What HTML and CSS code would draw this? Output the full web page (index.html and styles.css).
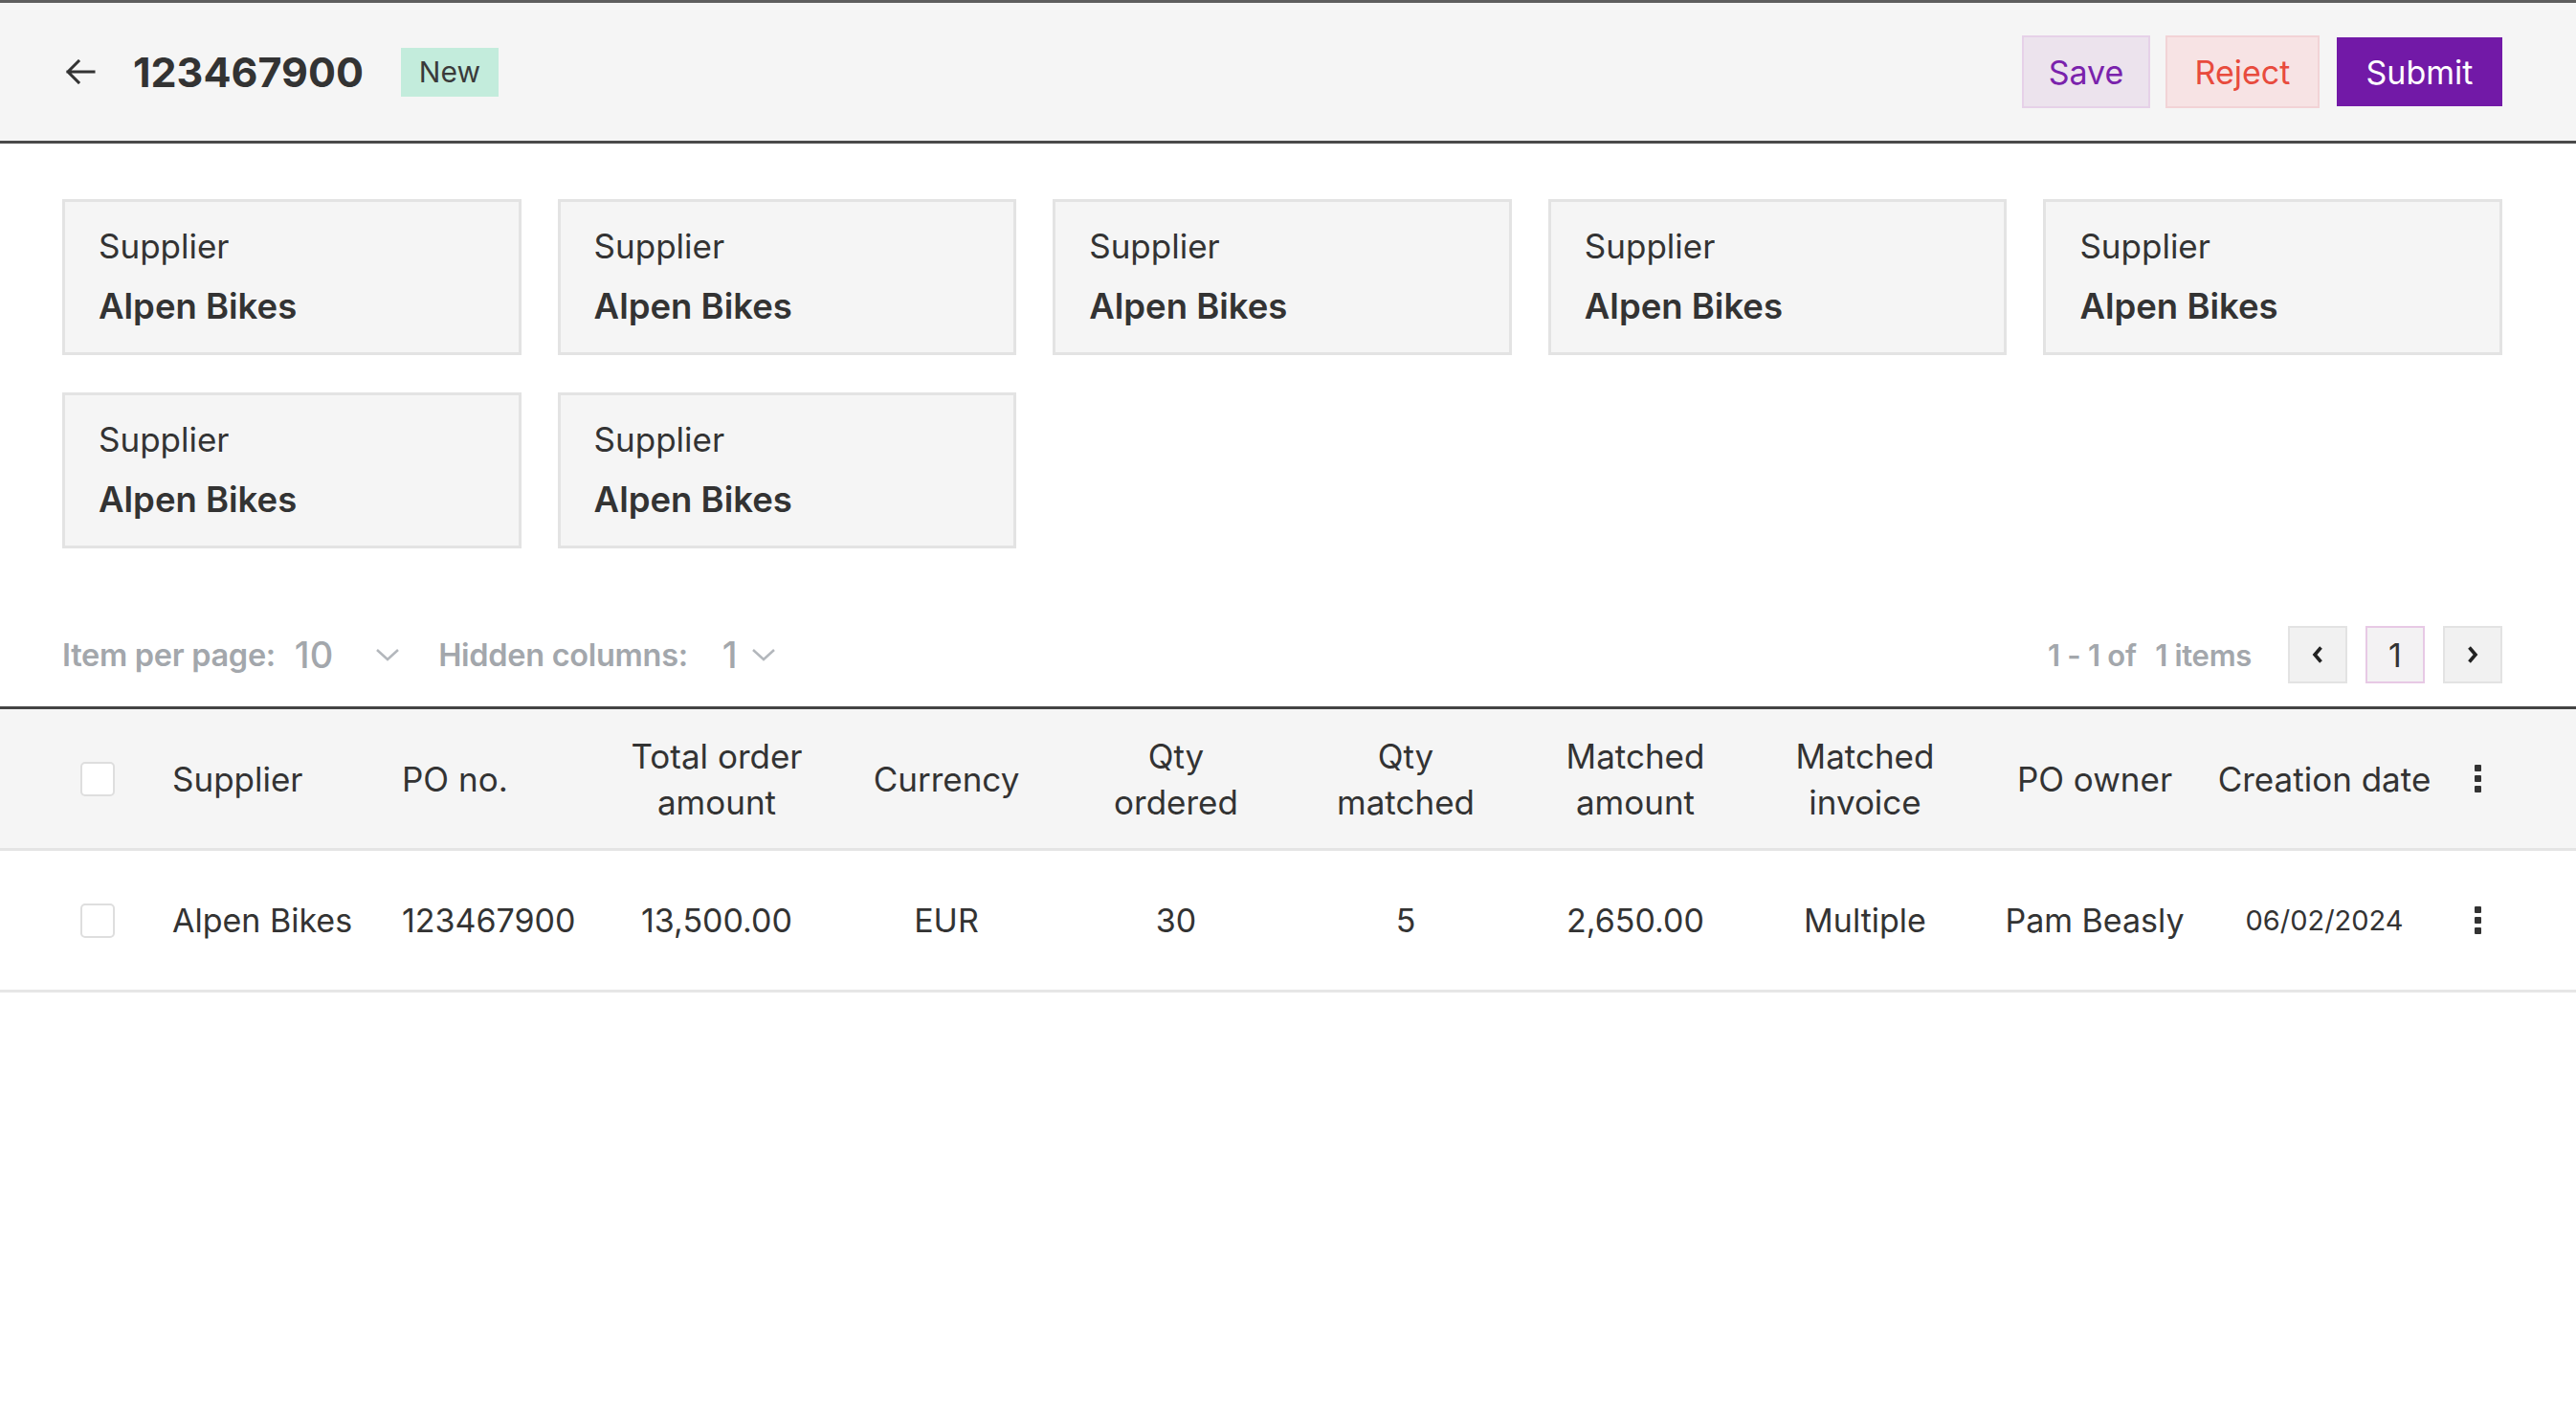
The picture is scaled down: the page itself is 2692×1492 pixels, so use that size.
FILE: index.html
```html
<!DOCTYPE html>
<html lang="en">
<head>
<meta charset="utf-8">
<title>PO 123467900</title>
<link rel="stylesheet" href="styles.css">
</head>
<body>
<header class="topbar">
  <div class="title-group">
    <svg class="back" width="32" height="26" viewBox="0 0 32 26"><path d="M30 13H3M14 2L3 13l11 11" fill="none" stroke="#333" stroke-width="3" stroke-linecap="square"/></svg>
    <h1 class="title">123467900</h1>
    <span class="badge">New</span>
  </div>
  <div class="actions">
    <button class="btn btn-save">Save</button>
    <button class="btn btn-reject">Reject</button>
    <button class="btn btn-submit">Submit</button>
  </div>
</header>

<section class="cards">
  <div class="card"><div class="card-label">Supplier</div><div class="card-value">Alpen Bikes</div></div>
  <div class="card"><div class="card-label">Supplier</div><div class="card-value">Alpen Bikes</div></div>
  <div class="card"><div class="card-label">Supplier</div><div class="card-value">Alpen Bikes</div></div>
  <div class="card"><div class="card-label">Supplier</div><div class="card-value">Alpen Bikes</div></div>
  <div class="card"><div class="card-label">Supplier</div><div class="card-value">Alpen Bikes</div></div>
  <div class="card"><div class="card-label">Supplier</div><div class="card-value">Alpen Bikes</div></div>
  <div class="card"><div class="card-label">Supplier</div><div class="card-value">Alpen Bikes</div></div>
</section>

<section class="toolbar">
  <div class="tool-left">
    <span class="tool-label">Item per page:</span>
    <span class="tool-value tv-10">10</span>
    <svg class="chev" width="26" height="14" viewBox="0 0 26 14"><polyline points="2,2 13,12 24,2" fill="none" stroke="#b3b7bc" stroke-width="2.5"/></svg>
    <span class="tool-label tl-hidden">Hidden columns:</span>
    <span class="tool-value tv-1">1</span>
    <svg class="chev chev-2" width="26" height="14" viewBox="0 0 26 14"><polyline points="2,2 13,12 24,2" fill="none" stroke="#b3b7bc" stroke-width="2.5"/></svg>
  </div>
  <div class="tool-right">
    <span class="range">1 - 1 of <span class="range-items">1 items</span></span>
    <div class="pager">
      <button class="pg"><svg width="16" height="24" viewBox="0 0 16 24"><polyline points="11.5,4.5 5,12 11.5,19.5" fill="none" stroke="#222" stroke-width="3.6"/></svg></button>
      <button class="pg pg-current">1</button>
      <button class="pg"><svg width="16" height="24" viewBox="0 0 16 24"><polyline points="4.5,4.5 11,12 4.5,19.5" fill="none" stroke="#222" stroke-width="3.6"/></svg></button>
    </div>
  </div>
</section>

<section class="table">
  <div class="row head">
    <div class="cell cb-cell"><span class="checkbox"></span></div>
    <div class="cell left">Supplier</div>
    <div class="cell left">PO no.</div>
    <div class="cell">Total order<br>amount</div>
    <div class="cell">Currency</div>
    <div class="cell">Qty<br>ordered</div>
    <div class="cell">Qty<br>matched</div>
    <div class="cell">Matched<br>amount</div>
    <div class="cell">Matched<br>invoice</div>
    <div class="cell">PO owner</div>
    <div class="cell">Creation date</div>
    <div class="cell kebab-cell"><span class="kebab"><i></i><i></i><i></i></span></div>
  </div>
  <div class="row body">
    <div class="cell cb-cell"><span class="checkbox"></span></div>
    <div class="cell left">Alpen Bikes</div>
    <div class="cell left">123467900</div>
    <div class="cell">13,500.00</div>
    <div class="cell">EUR</div>
    <div class="cell">30</div>
    <div class="cell">5</div>
    <div class="cell">2,650.00</div>
    <div class="cell">Multiple</div>
    <div class="cell">Pam Beasly</div>
    <div class="cell date">06/02/2024</div>
    <div class="cell kebab-cell"><span class="kebab"><i></i><i></i><i></i></span></div>
  </div>
</section>
</body>
</html>
```

FILE: styles.css
```css
* { box-sizing: border-box; }
html, body { margin: 0; padding: 0; background: #fff; }
body {
  font-family: Inter, "Open Sans", "Liberation Sans", sans-serif;
  color: #333;
  width: 2692px;
}

/* Header */
.topbar {
  height: 150px;
  background: #f5f5f5;
  border-top: 3px solid #5e5e5e;
  border-bottom: 3px solid #4a4a4a;
  display: flex;
  align-items: center;
  justify-content: space-between;
  padding: 0 77px 0 68px;
}
.title-group { display: flex; align-items: center; }
.back { display: block; margin-right: 39px; }
.title {
  margin: 0;
  font-size: 43px;
  font-weight: 700;
  color: #333;
  line-height: 1;
}
.badge {
  margin-left: 39px;
  width: 102px;
  height: 51px;
  background: #c3ecdc;
  color: #3a3a3a;
  font-size: 30px;
  display: flex;
  align-items: center;
  justify-content: center;
}
.actions { display: flex; align-items: center; gap: 16px; }
.btn {
  font-family: inherit;
  font-size: 34px;
  border: 2px solid transparent;
  display: flex;
  align-items: center;
  justify-content: center;
  padding: 0;
  cursor: pointer;
}
.btn-save { width: 134px; height: 76px; background: #ece3ed; border-color: #e6d1e8; color: #7a22ac; }
.btn-reject { width: 161px; height: 76px; background: #f7e3e4; border-color: #f2d3d6; color: #e84b3d; }
.btn-submit { width: 173px; height: 72px; background: #7219a7; border-color: #7219a7; color: #fff; margin-left: 2px; }

/* Cards */
.cards {
  display: grid;
  grid-template-columns: repeat(5, 1fr);
  gap: 39px 38px;
  padding: 58px 77px 0 65px;
}
.card {
  height: 163px;
  background: #f5f5f5;
  border: 3px solid #e3e3e3;
  padding: 24px 35px;
}
.card-label { font-size: 35px; line-height: 44px; color: #333; }
.card-value { font-size: 36.5px; line-height: 48px; font-weight: 600; color: #333; margin-top: 17px; }

/* Toolbar */
.toolbar {
  display: flex;
  justify-content: space-between;
  align-items: center;
  height: 60px;
  margin-top: 81px;
  margin-bottom: 24px;
  padding: 0 77px 0 65px;
}
.tool-left, .tool-right { display: flex; align-items: center; }
.tool-label { font-size: 32.5px; font-weight: 600; color: #a3a7ac; letter-spacing: -0.3px; }
.tool-value { font-size: 38px; font-weight: 500; color: #a3a7ac; }
.tv-10 { margin-left: 20px; }
.chev { display: block; margin-left: 44px; }
.tl-hidden { margin-left: 40px; }
.tv-1 { margin-left: 36px; }
.chev-2 { margin-left: 14px; }
.range { font-size: 31px; font-weight: 600; color: #a3a7ac; letter-spacing: -0.3px; }
.range-items { margin-left: 12px; }
.pager { display: flex; gap: 19px; margin-left: 38px; }
.pg {
  width: 62px;
  height: 60px;
  background: #f1f1f1;
  border: 2px solid #e3e3e3;
  display: flex;
  align-items: center;
  justify-content: center;
  padding: 0;
  font-family: inherit;
  font-size: 34px;
  color: #333;
}
.pg svg { display: block; }
.pg-current { border-color: #e7c9e5; background: #f3f2f3; }

/* Table */
.table { border-top: 3px solid #444; }
.row {
  display: grid;
  grid-template-columns: 149px repeat(10, 240px) 80px 1fr;
  align-items: center;
}
.row.head { height: 148px; background: #f5f5f5; border-bottom: 3px solid #e4e4e4; }
.row.body { height: 148px; background: #fff; border-bottom: 3px solid #e6e6e6; }
.cell { text-align: center; color: #333; }
.head .cell { font-size: 35px; line-height: 48px; }
.body .cell { font-size: 34px; line-height: 48px; }
.cell.left { text-align: left; padding-left: 31px; }
.body .cell.date { font-size: 29px; }
.cb-cell { padding-left: 84px; display: flex; }
.checkbox {
  display: block;
  width: 36px;
  height: 36px;
  border: 2px solid #dedede;
  border-radius: 5px;
  background: #fff;
}
.kebab-cell { display: flex; justify-content: center; }
.kebab { display: flex; flex-direction: column; gap: 4px; }
.kebab i { display: block; width: 7px; height: 7px; background: #333; border-radius: 1px; }
```
